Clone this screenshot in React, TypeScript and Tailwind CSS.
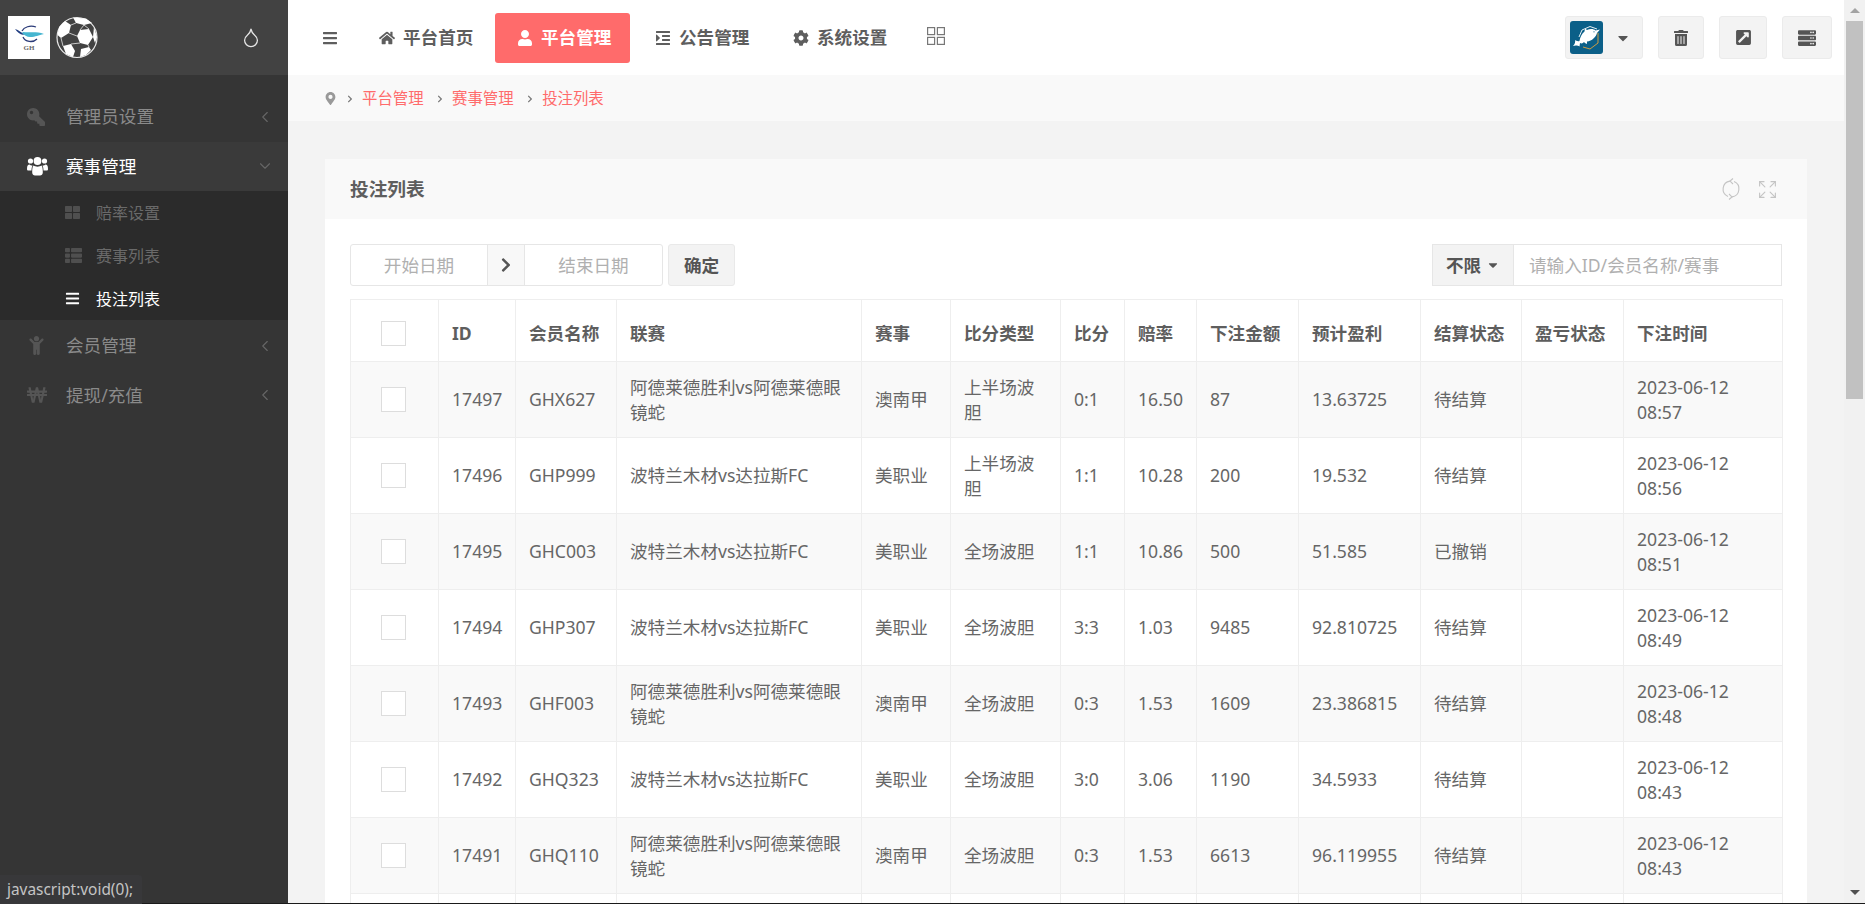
import {
  FaBars,
  FaCaretDown,
  FaChevronRight,
  FaChild,
  FaCog,
  FaExternalLinkSquareAlt,
  FaHome,
  FaIndent,
  FaKey,
  FaMapMarkerAlt,
  FaServer,
  FaThLarge,
  FaThList,
  FaTrashAlt,
  FaUser,
  FaWonSign,
} from "react-icons/fa";
import { ChevronDown, ChevronLeft, Droplet, Expand } from "lucide-react";

const columns = [
  { label: "", width: "w-[88px]" },
  { label: "ID", width: "w-[77px]" },
  { label: "会员名称", width: "w-[101px]" },
  { label: "联赛", width: "w-[245px]" },
  { label: "赛事", width: "w-[89px]" },
  { label: "比分类型", width: "w-[110px]" },
  { label: "比分", width: "w-[64px]" },
  { label: "赔率", width: "w-[72px]" },
  { label: "下注金额", width: "w-[102px]" },
  { label: "预计盈利", width: "w-[122px]" },
  { label: "结算状态", width: "w-[101px]" },
  { label: "盈亏状态", width: "w-[102px]" },
  { label: "下注时间", width: "w-[159px]" },
];

const adelaide = "阿德莱德胜利vs阿德莱德眼镜蛇";
const portland = "波特兰木材vs达拉斯FC";

const rows = [
  ["17497", "GHX627", adelaide, "澳南甲", "上半场波胆", "0:1", "16.50", "87", "13.63725", "待结算", "", "2023-06-12 08:57"],
  ["17496", "GHP999", portland, "美职业", "上半场波胆", "1:1", "10.28", "200", "19.532", "待结算", "", "2023-06-12 08:56"],
  ["17495", "GHC003", portland, "美职业", "全场波胆", "1:1", "10.86", "500", "51.585", "已撤销", "", "2023-06-12 08:51"],
  ["17494", "GHP307", portland, "美职业", "全场波胆", "3:3", "1.03", "9485", "92.810725", "待结算", "", "2023-06-12 08:49"],
  ["17493", "GHF003", adelaide, "澳南甲", "全场波胆", "0:3", "1.53", "1609", "23.386815", "待结算", "", "2023-06-12 08:48"],
  ["17492", "GHQ323", portland, "美职业", "全场波胆", "3:0", "3.06", "1190", "34.5933", "待结算", "", "2023-06-12 08:43"],
  ["17491", "GHQ110", adelaide, "澳南甲", "全场波胆", "0:3", "1.53", "6613", "96.119955", "待结算", "", "2023-06-12 08:43"],
];

const Checkbox = () => (
  <span className="block ml-[17px] w-[25px] h-[25px] bg-white border border-[#dddddd]" />
);

const GhLogo = () => (
  <div className="w-[42px] h-[43px] bg-white flex flex-col items-center shrink-0">
    <svg viewBox="0 0 42 24" className="w-[42px] h-[24px] mt-[4px]">
      <path d="M14 11C16 7 22 5 28 7" fill="none" stroke="#2a3a78" strokeWidth="1.3" />
      <path d="M15 17C17 22 25 23 29 19" fill="none" stroke="#2a3a78" strokeWidth="1.3" />
      <path d="M7 9C11 10 13 13 17 14C14 16 10 13 7 9Z" fill="#1f3c80" />
      <path d="M15 12C22 13 28 11 36 14C30 15 28 17 22 17C19 17 16 15 14 13Z" fill="#46b5d0" />
    </svg>
    <span className="text-[7px] leading-[9px] font-bold text-[#666666] [font-family:'Liberation_Serif',serif]">GH</span>
  </div>
);

const Ball = () => (
  <svg viewBox="0 0 42 43" className="w-[42px] h-[43px] ml-[6px] shrink-0">
    <circle cx="21" cy="21.5" r="20" fill="#424242" stroke="#e8e8e8" strokeWidth="1.2" />
    <g fill="#ffffff">
      <polygon points="17,1.500 30,2.500 36,7 28,9 20,7" />
      <polygon points="9,5 15,9 13,17 5,22 1.500,19 3,11" />
      <polygon points="24,14 33,13 37,21 32,29 24,27 21,20" />
      <polygon points="7,30 15,28 19,35 17,41 10,38" />
      <polygon points="25,33 33,31 35,34 30,39 24,41" />
      <polygon points="38,11 41,21 39,27 37,21" />
    </g>
    <path d="M20 7L15 9M28 9L33 13M13 17L21 20M24 27L15 28M32 29L33 31M5 22L7 30M24 14L28 9" stroke="#e8e8e8" strokeWidth="0.8" fill="none" />
  </svg>
);

const Dolphin = () => (
  <svg viewBox="0 0 33 33" className="w-[33px] h-[33px] rounded-[3px] shrink-0">
    <rect width="33" height="33" fill="#0b5f88" />
    <path d="M9 16L12 9L20 5.500L27 8" fill="none" stroke="#ffffff" strokeWidth="0.9" />
    <path d="M13 26L20 28L28 22V12" fill="none" stroke="#e3a33a" strokeWidth="0.9" />
    <path d="M30 8.500L25.500 9.500C24 8 20 7.500 17 9L15 7.500L14.500 10.500C11.500 13 10 17 9.500 20C8 20.500 6 20 5 19C5.500 21 5 23 3 25C5.500 24 8 24.500 9.500 25.500L10 22C12 23 13 22 14 21C15 22 15.500 22.500 17 23L17 20.500C22 20 26 16 27 12Z" fill="#ffffff" />
    <circle cx="24" cy="10.800" r="0.600" fill="#0b5f88" />
  </svg>
);

const GroupIcon = () => (
  <svg viewBox="0 0 21 20" className="w-[21px] h-[20px]" fill="currentColor">
    <circle cx="3.500" cy="5" r="2.600" />
    <circle cx="17.500" cy="5" r="2.600" />
    <circle cx="10.500" cy="5" r="3.900" />
    <path d="M0 13C0 9.500 1 8.500 2.500 8.500C3.500 9.500 4.500 9.800 5.500 9.500C4.800 11 4.500 12.500 4.500 14.500H1.500C.5 14.500 0 14 0 13Z" />
    <path d="M21 13C21 9.500 20 8.500 18.500 8.500C17.500 9.500 16.500 9.800 15.500 9.500C16.200 11 16.500 12.500 16.500 14.500H19.500C20.500 14.500 21 14 21 13Z" />
    <path d="M6.500 9.500C8.500 11 12.500 11 14.500 9.500C15.500 10.500 15.800 13 15.800 16.500C15.800 18.500 14.500 19.500 13 19.500H8C6.500 19.500 5.200 18.500 5.200 16.500C5.200 13 5.500 10.500 6.500 9.500Z" />
  </svg>
);

const RefreshIcon = () => (
  <svg viewBox="0 0 24 24" className="w-[24px] h-[24px]" fill="none" stroke="currentColor" strokeWidth="1.100">
    <path d="M11 4.100A8 8 0 0 0 9 19.400" />
    <path d="M14 1.500L11 4.100L14 7" />
    <path d="M13 19.900A8 8 0 0 0 15 4.600" />
    <path d="M10 22.500L13 19.900L10 17" />
  </svg>
);

const SideItem = ({ icon, label, open }: { icon: React.ReactNode; label: string; open?: boolean }) => (
  <div className={`h-[49.5px] flex items-center pl-[27px] pr-[14px] text-[17.6px] ${open ? "bg-[#3a3a3a] text-white" : "text-[#8a8a8a]"}`}>
    <span className={`w-[39px] text-[18px] flex ${open ? "text-white" : "text-[#555555]"}`}>{icon}</span>
    <span className="flex-1 pb-[1px]">{label}</span>
    {open ? <ChevronDown className="w-[18px] h-[18px] text-[#666666]" strokeWidth={1.5} /> : <ChevronLeft className="w-[18px] h-[18px] text-[#666666]" strokeWidth={1.5} />}
  </div>
);

const SubItem = ({ icon, label, active }: { icon: React.ReactNode; label: string; active?: boolean }) => (
  <div className={`h-[43px] flex items-center pl-[65px] text-[16px] ${active ? "text-white" : "text-[#6a6a6a]"}`}>
    <span className={`w-[31px] text-[15px] flex ${active ? "text-white" : "text-[#4f4f4f]"}`}>{icon}</span>
    {label}
  </div>
);

const NavItem = ({ icon, label, width, pad, active }: { icon: React.ReactNode; label: string; width: string; pad: string; active?: boolean }) => (
  <div className={`h-[50px] flex items-center gap-[8px] rounded-[3px] font-bold text-[17.6px] ${width} ${pad} ${active ? "bg-[#ff6b6b] text-white" : "text-[#5e5e5e]"}`}>
    <span className="text-[16px] flex w-[17px] justify-center">{icon}</span>
    {label}
  </div>
);

const ToolButton = ({ children, width }: { children: React.ReactNode; width: string }) => (
  <div className={`h-[43px] flex items-center justify-center bg-[#f3f3f3] border border-[#ebebeb] rounded-[3px] text-[#555555] ${width}`}>
    {children}
  </div>
);

const Crumb = ({ label }: { label: string }) => (
  <>
    <FaChevronRight className="text-[8px] text-[#777777] ml-[4px] mr-[8px]" />
    <span className="text-[#ff6b6b] mr-[8.5px]">{label}</span>
  </>
);

export default function App() {
  return (
    <div className="relative flex h-screen overflow-hidden bg-[#f3f3f3] text-[#666666] [font-family:'Noto_Sans','Noto_Sans_CJK_SC',sans-serif]">
      {/* Sidebar */}
      <aside className="w-[288px] shrink-0 bg-[#353535]">
        <div className="h-[75px] flex items-center pl-[8px] pr-[26px] bg-[#424242]">
          <GhLogo />
          <Ball />
          <Droplet className="ml-auto w-[22px] h-[23px] text-[#e6e6e6]" strokeWidth={1.4} />
        </div>
        <nav className="pt-[17px]">
          <SideItem icon={<FaKey className="-scale-x-100" />} label="管理员设置" />
          <SideItem icon={<GroupIcon />} label="赛事管理" open />
          <div className="bg-[#2b2b2b] mb-[1px]">
            <SubItem icon={<FaThLarge />} label="赔率设置" />
            <SubItem icon={<FaThList className="text-[17px]" />} label="赛事列表" />
            <SubItem icon={<FaBars />} label="投注列表" active />
          </div>
          <SideItem icon={<FaChild className="text-[19px]" />} label="会员管理" />
          <SideItem icon={<FaWonSign className="text-[20px]" />} label="提现/充值" />
        </nav>
      </aside>

      {/* Main column */}
      <main className="flex-1 min-w-0 overflow-hidden">
        <header className="h-[75px] bg-white flex items-center pl-[34px] pr-[12px]">
          <FaBars className="text-[16px] text-[#5e5e5e] mr-[18px] shrink-0" />
          <NavItem icon={<FaHome />} label="平台首页" width="w-[139px]" pad="pl-[22px]" />
          <NavItem icon={<FaUser />} label="平台管理" width="w-[135px]" pad="pl-[21px]" active />
          <NavItem icon={<FaIndent />} label="公告管理" width="w-[140px]" pad="pl-[24px]" />
          <NavItem icon={<FaCog />} label="系统设置" width="w-[139px]" pad="pl-[22px]" />
          <svg viewBox="0 0 18 18" className="w-[18px] h-[18px] ml-[18px] -mt-[3px] text-[#777777]" fill="none" stroke="currentColor" strokeWidth="1.2">
            <rect x="0.600" y="0.600" width="7" height="7" />
            <rect x="10.400" y="0.600" width="7" height="7" />
            <rect x="0.600" y="10.400" width="7" height="7" />
            <rect x="10.400" y="10.400" width="7" height="7" />
          </svg>
          <div className="ml-auto flex items-center gap-[15px]">
            <div className="h-[43px] w-[78px] flex items-center pl-[4px] bg-[#f3f3f3] border border-[#ebebeb] rounded-[3px]">
              <Dolphin />
              <FaCaretDown className="ml-[12px] text-[16px] text-[#555555]" />
            </div>
            <ToolButton width="w-[46px]"><FaTrashAlt className="text-[16px]" /></ToolButton>
            <ToolButton width="w-[48px]"><FaExternalLinkSquareAlt className="text-[17px]" /></ToolButton>
            <ToolButton width="w-[50px]"><FaServer className="text-[18px]" /></ToolButton>
          </div>
        </header>

        {/* Breadcrumb */}
        <div className="h-[46px] bg-[#f9f9f9] flex items-center pl-[36px] pt-[1px] text-[15.4px]">
          <FaMapMarkerAlt className="text-[13px] text-[#999999] mr-[5px]" />
          <Crumb label="平台管理" />
          <Crumb label="赛事管理" />
          <Crumb label="投注列表" />
        </div>

        {/* Panel */}
        <section className="mx-[37px] mt-[38px] bg-white">
          <div className="h-[60px] bg-[#f9f9f9] flex items-center justify-between pl-[25px] pr-[29px]">
            <h2 className="font-bold text-[18.7px] text-[#5e5e5e]">投注列表</h2>
            <div className="flex items-center gap-[14px] text-[#c4c4c4]">
              <RefreshIcon />
              <Expand className="w-[21px] h-[21px]" strokeWidth={1.3} />
            </div>
          </div>

          <div className="px-[25px] pt-[25px]">
            <div className="flex items-center justify-between h-[42px]">
              <div className="flex items-stretch h-full text-[17.6px]">
                <div className="flex items-stretch w-[313px] border border-[#e6e6e6] rounded-[3px] overflow-hidden">
                  <input placeholder="开始日期" className="w-[136px] min-w-0 text-center outline-none placeholder:text-[#b0b0b0]" />
                  <span className="w-[38px] flex items-center justify-center bg-[#f8f8f8] border-x border-[#e6e6e6] text-[#555555]">
                    <FaChevronRight className="text-[16px]" />
                  </span>
                  <input placeholder="结束日期" className="flex-1 min-w-0 text-center outline-none placeholder:text-[#b0b0b0]" />
                </div>
                <button className="ml-[5px] w-[67px] bg-[#f3f3f3] border border-[#e9e9e9] rounded-[3px] font-bold text-[#555555]">确定</button>
              </div>
              <div className="flex items-stretch h-full w-[350px] border border-[#e6e6e6] text-[17.6px]">
                <span className="w-[81px] flex items-center justify-center gap-[5px] bg-[#f3f3f3] border-r border-[#e6e6e6] font-bold text-[#555555]">
                  不限 <FaCaretDown className="text-[14px]" />
                </span>
                <input placeholder="请输入ID/会员名称/赛事" className="flex-1 min-w-0 pl-[15px] outline-none placeholder:text-[#b0b0b0]" />
              </div>
            </div>

            <table className="mt-[13px] w-[1432px] table-fixed border-collapse text-[17.6px] leading-[25px]">
              <thead>
                <tr className="h-[62px]">
                  {columns.map((col, i) => (
                    <th key={i} className={`${col.width} border border-[#eeeeee] px-[13px] pt-[5px] text-left font-bold text-[#5e5e5e]`}>
                      {i === 0 ? <Checkbox /> : col.label}
                    </th>
                  ))}
                </tr>
              </thead>
              <tbody>
                {rows.map((row, r) => (
                  <tr key={row[0]} className={`h-[76px] ${r % 2 === 0 ? "bg-[#f9f9f9]" : "bg-white"}`}>
                    <td className="border border-[#eeeeee] px-[13px]"><Checkbox /></td>
                    {row.map((cell, c) => (
                      <td key={c} className="border border-[#eeeeee] px-[13px]">{cell}</td>
                    ))}
                  </tr>
                ))}
                <tr className="h-[76px] bg-white">
                  {columns.map((col) => (
                    <td key={col.label} className="border border-[#eeeeee]" />
                  ))}
                </tr>
              </tbody>
            </table>
          </div>
        </section>
      </main>

      {/* Page scrollbar */}
      <div className="w-[21px] shrink-0 bg-[#f1f1f1] flex flex-col items-center">
        <div className="h-[21px] flex items-center justify-center">
          <span className="w-0 h-0 border-x-[5px] border-x-transparent border-b-[5px] border-b-[#a3a3a3]" />
        </div>
        <div className="w-[17px] h-[378px] bg-[#c1c1c1]" />
        <div className="mt-auto h-[24px] flex items-center justify-center">
          <span className="w-0 h-0 border-x-[5px] border-x-transparent border-t-[5px] border-t-[#505050]" />
        </div>
      </div>

      {/* Browser status bubble and window edge */}
      <div className="absolute inset-x-0 bottom-0 h-px bg-[#1a1a1a]" />
      <div className="absolute left-0 bottom-0 w-[142px] h-[29px] flex items-center pl-[7px] bg-[#38383a] rounded-tr-[3px] text-[15.4px] text-[#c4c4c4]">
        javascript:void(0);
      </div>
    </div>
  );
}
